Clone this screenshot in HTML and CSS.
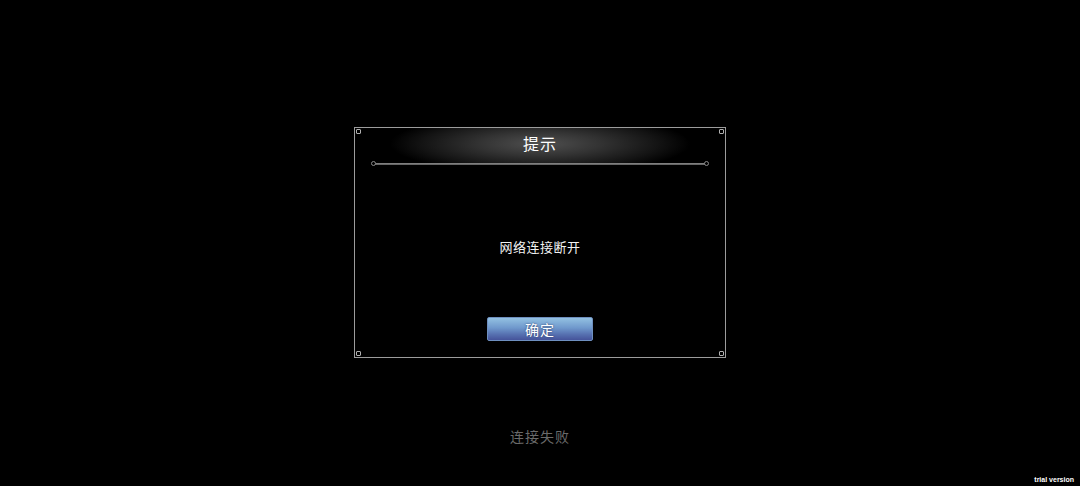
FILE: index.html
```html
<!DOCTYPE html>
<html lang="zh-CN">
<head>
  <meta charset="UTF-8" />
  <meta name="viewport" content="width=device-width, initial-scale=1.0" />
  <title>提示</title>
  <link rel="stylesheet" href="styles.css">
</head>
<body>
  <div class="screen">
    <div class="dialog">
      <span class="corner tl"></span>
      <span class="corner tr"></span>
      <span class="corner bl"></span>
      <span class="corner br"></span>
      <div class="dialog-head">
        <div class="title">提示</div>
      </div>
      <div class="divider"></div>
      <div class="message">网络连接断开</div>
      <div class="actions">
        <button class="ok-btn">确定</button>
      </div>
    </div>
    <div class="status">连接失败</div>
  </div>
  <div class="watermark">trial version</div>
</body>
</html>
```

FILE: styles.css
```css
body {
  margin: 0;
  background-color: #000000;
  font-family: "Noto Sans CJK SC", "Noto Sans", sans-serif;
  color: #f2f2f2;
  height: 486px;
  overflow: hidden;
}

.screen {
  display: flex;
  flex-direction: column;
  align-items: center;
  padding-top: 127px;
}

.dialog {
  position: relative;
  width: 370px;
  height: 229px;
  border: 1px solid #9c9c9c;
  display: flex;
  flex-direction: column;
}

.corner {
  position: absolute;
  width: 3px;
  height: 3px;
  border: 1px solid #b0b0b0;
  border-radius: 1px;
}
.corner.tl { top: 1px; left: 1px; }
.corner.tr { top: 1px; right: 1px; }
.corner.bl { bottom: 1px; left: 1px; }
.corner.br { bottom: 1px; right: 1px; }

.dialog-head {
  height: 35px;
  display: flex;
  align-items: center;
  justify-content: center;
  padding-bottom: 6px;
  box-sizing: border-box;
  background: radial-gradient(ellipse 150px 30px at 50% 45%, #505050 0%, #333333 40%, #141414 78%, #000000 100%);
}

.title {
  font-size: 16px;
  letter-spacing: 1px;
  color: #ffffff;
}

.divider {
  position: relative;
  margin: 0 19px;
  height: 2px;
  background: linear-gradient(180deg, #8a8a8a, #5a5a5a);
}
.divider::before,
.divider::after {
  content: "";
  position: absolute;
  top: -2px;
  width: 3px;
  height: 3px;
  border: 1px solid #888888;
  border-radius: 50%;
  background: #000000;
}
.divider::before { left: -3px; }
.divider::after { right: -3px; }

.message {
  margin-top: 72px;
  text-align: center;
  font-size: 13px;
  letter-spacing: 0.5px;
  line-height: 20px;
}

.actions {
  margin-top: 60px;
  display: flex;
  justify-content: center;
}

.ok-btn {
  width: 106px;
  height: 24px;
  padding: 0;
  border: 1px solid #6e8fbf;
  border-radius: 2px;
  background: linear-gradient(180deg, #93c1e2 0%, #6f98cc 45%, #5670b0 75%, #45539a 100%);
  color: #ffffff;
  font-family: "Noto Sans CJK SC", "Noto Sans", sans-serif;
  font-size: 14px;
  letter-spacing: 1px;
  text-shadow: 0 0 2px #2a3a66;
  cursor: pointer;
}

.status {
  margin-top: 68px;
  font-size: 14px;
  letter-spacing: 1px;
  color: #6a6a6a;
}

.watermark {
  position: absolute;
  right: 6px;
  bottom: 3px;
  font-family: "Liberation Sans", sans-serif;
  font-size: 7px;
  font-weight: bold;
  color: #ffffff;
}
```
